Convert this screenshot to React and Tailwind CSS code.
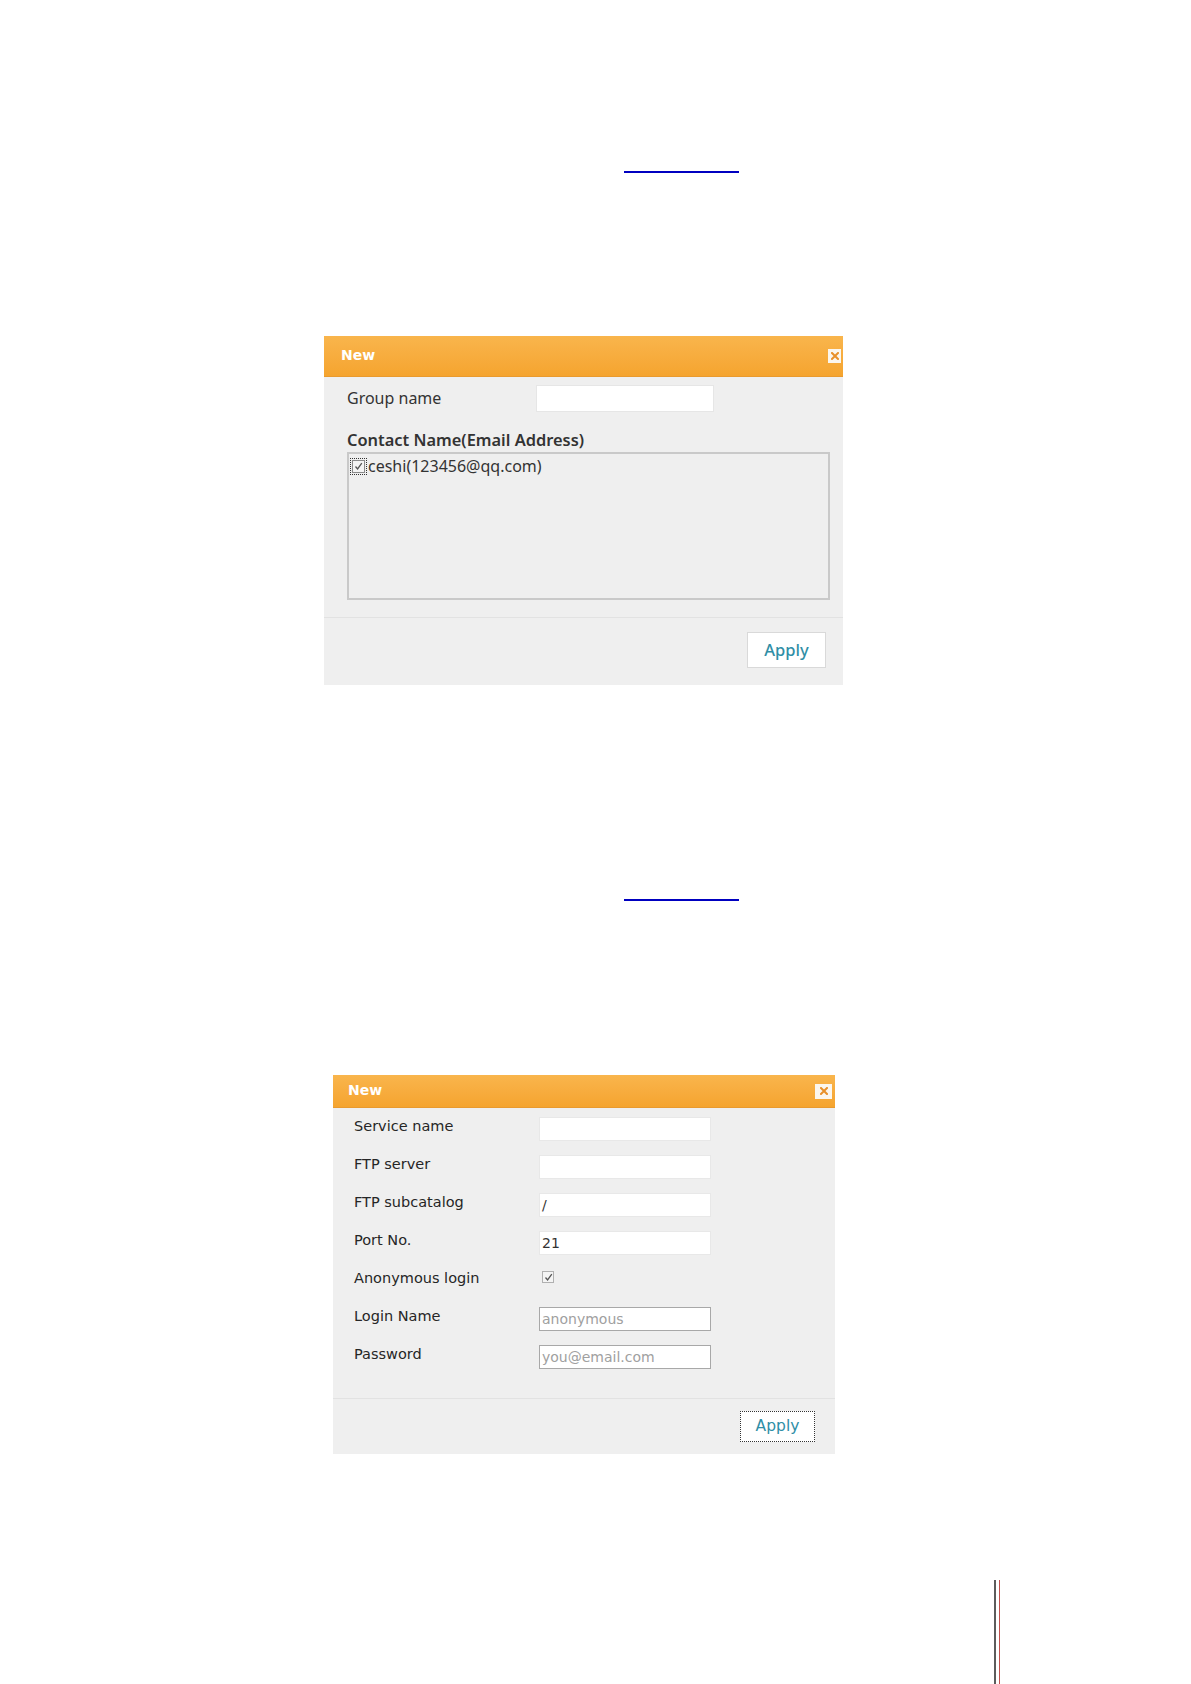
import React from "react";

function CloseBox({ size = "w-[13px] h-[14px]" }) {
  return (
    <div className={`${size} bg-[#fbf6ee] flex items-center justify-center`}>
      <svg width="8" height="8" viewBox="0 0 8 8">
        <path d="M1 1 L7 7 M7 1 L1 7" stroke="#e8902a" strokeWidth="2" strokeLinecap="square" />
      </svg>
    </div>
  );
}

function Check({ className = "" }) {
  return (
    <div className={`w-[12px] h-[12px] border border-[#8a8a8a] bg-[#f4f4f4] flex items-center justify-center ${className}`}>
      <svg width="9" height="9" viewBox="0 0 9 9">
        <path d="M1.5 4.5 L3.6 7 L7.8 1.2" stroke="#555" strokeWidth="1.3" fill="none" />
      </svg>
    </div>
  );
}

function Row({ label, children }) {
  return (
    <div className="flex items-center h-[38px]">
      <div className="w-[206px] pl-[21px] pb-[4px] text-[14.5px] text-[#262626]">{label}</div>
      {children}
    </div>
  );
}

function Field({ value = "", placeholder = false, bordered = false }) {
  return (
    <div
      className={`w-[172px] h-[24px] bg-white flex items-center px-[2px] text-[14px] ${
        bordered ? "border border-[#a8a8a8]" : "border border-[#e8e8e8]"
      } ${placeholder ? "text-[#a0a0a0]" : "text-[#333]"}`}
    >
      {value}
    </div>
  );
}

export default function App() {
  return (
    <div className="w-[1191px] h-[1684px] bg-white flex flex-col overflow-hidden">
      {/* link underline 1 */}
      <div className="mt-[171px] ml-[624px] w-[115px] h-[2px] bg-[#0000c0]" />

      {/* Dialog 1 */}
      <div
        className="mt-[163px] ml-[324px] w-[519px] bg-[#efefef] flex flex-col"
        style={{ fontFamily: '"Noto Sans", "Open Sans", sans-serif' }}
      >
        <div className="h-[41px] bg-gradient-to-b from-[#f9b54c] to-[#f5a42e] border-b border-[#e99a2e] flex items-center justify-between pl-[17px] pr-[2px]">
          <span className="text-white font-bold text-[14px] -mt-[2px]" style={{ fontFamily: '"DejaVu Sans", sans-serif' }}>
            New
          </span>
          <CloseBox size="w-[13px] h-[14px]" />
        </div>
        <div className="flex items-center mt-[7px] h-[28px]">
          <div className="w-[212px] pl-[23px] text-[16px] text-[#333]">Group name</div>
          <div className="w-[178px] h-[27px] bg-white border border-[#e6e6e6]" />
        </div>
        <div className="pl-[23px] mt-[18px] text-[16.4px] font-semibold text-[#333] leading-[20px]">
          Contact Name(Email Address)
        </div>
        <div className="ml-[23px] mt-[2px] w-[483px] h-[148px] border-2 border-[#c9c9c9] flex flex-col">
          <div className="flex items-center h-[20px] mt-[2px]">
            <div className="ml-[1px] p-[1px] border border-dotted border-[#333]">
              <Check className="w-[13px] h-[13px]" />
            </div>
            <span className="ml-[1px] text-[16px] text-[#333]">ceshi(123456@qq.com)</span>
          </div>
        </div>
        <div className="mt-[17px] h-[1px] bg-[#e2e2e2]" />
        <div className="flex justify-end pr-[17px] pt-[14px] pb-[17px]">
          <div className="w-[79px] h-[36px] bg-white border border-[#d9d9d9] flex items-center justify-center text-[16.5px] font-medium text-[#2f8ea6]">
            Apply
          </div>
        </div>
      </div>

      {/* link underline 2 */}
      <div className="mt-[214px] ml-[624px] w-[115px] h-[2px] bg-[#0000c0]" />

      {/* Dialog 2 */}
      <div
        className="mt-[174px] ml-[333px] w-[502px] bg-[#efefef] flex flex-col"
        style={{ fontFamily: '"DejaVu Sans", Verdana, sans-serif' }}
      >
        <div className="h-[33px] bg-gradient-to-b from-[#f9b54c] to-[#f5a42e] border-b border-[#e99a2e] flex items-center justify-between pl-[15px] pr-[3px]">
          <span className="text-white font-bold text-[14px] -mt-[2px]">New</span>
          <CloseBox size="w-[17px] h-[15px]" />
        </div>
        <div className="flex flex-col pt-[2px]">
          <Row label="Service name">
            <Field />
          </Row>
          <Row label="FTP server">
            <Field />
          </Row>
          <Row label="FTP subcatalog">
            <Field value="/" />
          </Row>
          <Row label="Port No.">
            <Field value="21" />
          </Row>
          <Row label="Anonymous login">
            <Check className="ml-[3px] -mt-[8px] border-[#b0b0b0]" />
          </Row>
          <Row label="Login Name">
            <Field value="anonymous" placeholder bordered />
          </Row>
          <Row label="Password">
            <Field value="you@email.com" placeholder bordered />
          </Row>
        </div>
        <div className="mt-[22px] h-[1px] bg-[#e2e2e2]" />
        <div className="flex justify-end pr-[20px] pt-[12px] pb-[12px]">
          <div className="w-[75px] h-[31px] bg-white border border-dotted border-[#333] flex items-center justify-center text-[15.5px] text-[#2f8ea6]">
            Apply
          </div>
        </div>
      </div>

      {/* bottom-right margin lines */}
      <div className="mt-[126px] ml-[994px] flex h-[104px]">
        <div className="w-[2px] h-full bg-[#5c5c5c]" />
        <div className="ml-[3px] w-[1px] h-full bg-[#c0504d]" />
      </div>
    </div>
  );
}
